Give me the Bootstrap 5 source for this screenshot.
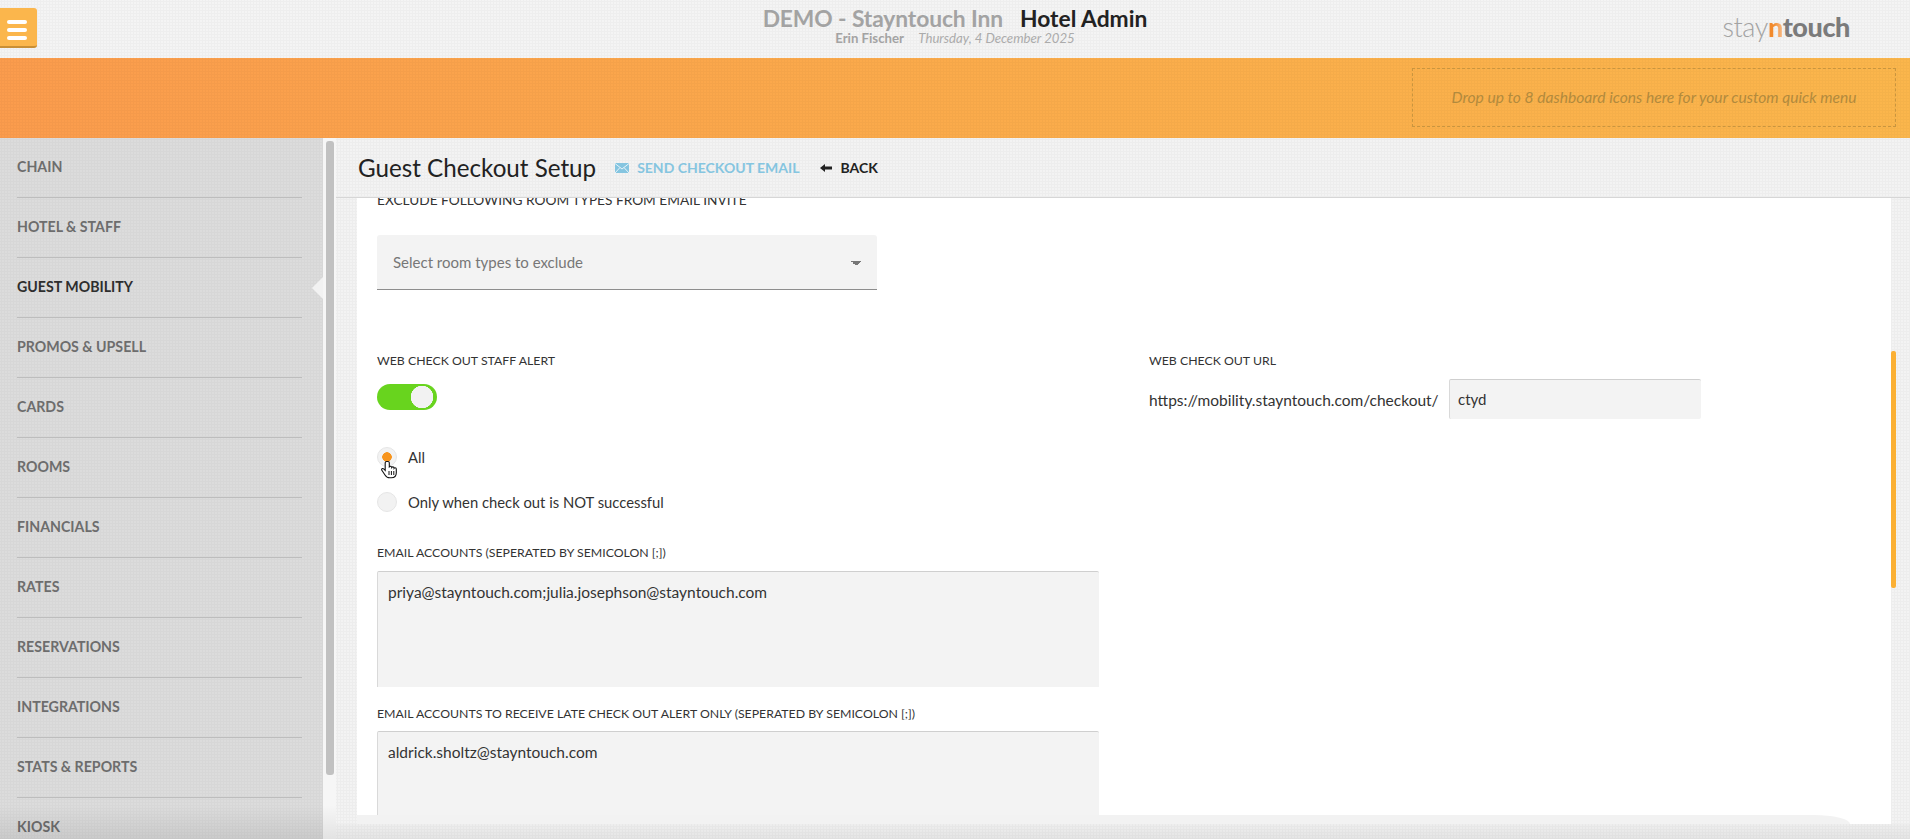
<!DOCTYPE html>
<html lang="en">
<head>
  <meta charset="UTF-8">
  <meta name="viewport" content="width=device-width, initial-scale=1.0">
  <title>Guest Checkout Setup</title>
  <link href="https://cdn.jsdelivr.net/npm/bootstrap@5.3.0/dist/css/bootstrap.min.css" rel="stylesheet">
  <style>
    :root { --weave: radial-gradient(rgba(0,0,0,.025) 1px, transparent 1.2px); }
    html, body { height: 839px; overflow: hidden; }
    body { font-family: Lato, "Liberation Sans", sans-serif; color: #333; background: #f2f2f2; font-size: 15px; }

    .top-head { height: 58px; background-color: #f4f4f4; background-image: var(--weave); background-size: 3px 3px; display: grid; grid-template-columns: 1fr auto 1fr; }
    .menu-btn { width: 37px; height: 40px; margin-top: 8px; padding: 10px 10px 0 7px; background: #fbb64c; border: 0; border-bottom: 2px solid #c98f35; border-radius: 0 3px 3px 0; }
    .menu-btn span { display: block; height: 4px; margin-bottom: 4px; background: #fff; border-radius: 2px; }
    .head-title { font-size: 22.800px; line-height: 28px; font-weight: 700; padding-top: 4px; text-align: center; white-space: nowrap; }
    .head-title .hotel { color: #a3a3a3; margin-right: 17px; letter-spacing: -.1px; }
    .head-title .role { color: #222; }
    .head-sub { font-size: 13.200px; line-height: 14px; margin-top: -1px; color: #a3a3a3; text-align: center; }
    .head-sub b { font-weight: 700; margin-right: 11px; }
    .head-sub i { color: #ababab; }
    .brand-word { justify-self: end; margin: 9px 60px 0 0; font-size: 27px; line-height: 36px; color: #a3a3a3; font-weight: 300; letter-spacing: -.4px; }
    .brand-word b { font-weight: 900; color: #7b7b7b; }
    .brand-word .n-mark { background: linear-gradient(90deg, #f28a2c 35%, #f7bd8c 100%); -webkit-background-clip: text; background-clip: text; color: transparent; }

    .orange-band { height: 80px; padding: 10px 14px 11px 0; background-color: #fbaa4c; background-image: var(--weave), linear-gradient(90deg, #fb9c4d 0%, #fbab4b 50%, #fbb64c 100%); background-size: 3px 3px, auto; display: flex; justify-content: flex-end; }
    .drop-zone { width: 484px; border: 1px dashed #c9953f; display: flex; align-items: center; justify-content: center; font-style: italic; font-size: 15.600px; color: #b28a3d; }

    .work-area { height: 701px; position: relative; }
    .side-menu { width: 323px; background-color: #dcdcdc; background-image: var(--weave); background-size: 3px 3px; padding: 0 21px 0 17px; overflow: hidden; }
    .side-link { height: 60px; line-height: 58px; border-bottom: 1px solid #bdbdbd; color: #6d6d6d; font-weight: 700; font-size: 14.200px; text-decoration: none; display: block; position: relative; }
    .side-link:last-child { border-bottom: 0; }
    .side-link.is-active { color: #2e2e2e; }
    .side-link.is-active::after { content: ""; position: absolute; right: -21px; top: 19px; border: 11px solid transparent; border-right-color: #f2f2f2; border-left-width: 0; }
    .side-gutter { width: 13px; padding: 3px 2px 0 3px; background: #f6f6f6; }
    .gutter-thumb { height: 634px; background: #c1c1c1; border-radius: 3px; }

    .page-pane { min-width: 0; background-color: #f3f3f3; background-image: var(--weave); background-size: 3px 3px; }
    .page-title-row { height: 60px; padding-left: 22px; border-bottom: 1px solid #d6d6d6; }
    .page-title-row h1 { font-size: 24.200px; font-weight: 400; color: #222; margin: 0 19px 0 0; }
    .mail-link { color: #85c5e0; font-weight: 700; font-size: 14px; text-decoration: none; }
    .back-link { color: #222; font-weight: 700; font-size: 14px; text-decoration: none; margin-left: 21px; }

    .pane-body { height: 626px; padding-left: 21px; }
    .white-sheet { background: #fff; height: 626px; width: 1534px; overflow: hidden; padding-left: 20px; position: relative; }
    .pane-track { width: 19px; padding: 153px 14px 0 0; }
    .pane-thumb { height: 237px; background: #fbb034; border-radius: 2px; }

    .field-label { font-size: 12.300px; color: #333; line-height: 16px; margin-bottom: 0; }
    .clip-label { margin-top: -6px; font-size: 13.700px; width: 500px; white-space: nowrap; }
    .room-select { width: 500px; height: 55px; margin-top: 27px; background-color: #f3f3f3; color: #777; border: 0; border-bottom: 1px solid #8d8d8d; border-radius: 3px 3px 0 0; font-size: 15px; padding-left: 16px; box-shadow: none; background-image: linear-gradient(45deg, transparent 50%, #777 50%), linear-gradient(-45deg, transparent 50%, #777 50%); background-size: 5px 5px, 5px 5px; background-position: 474px 26px, 479px 26px; background-repeat: no-repeat; }

    .alert-row { padding-top: 63px; height: 255px; }
    .alert-left { width: 772px; }
    .switch-box { margin: 15px 0 0; padding: 0; min-height: 0; height: 26px; }
    .form-switch .switch-input, .form-switch .switch-input:checked { width: 60px; height: 26px; margin: 0; float: none; border: 0; display: block; background-color: #68d41e; background-image: radial-gradient(circle at 45px 13px, #f2f2f2 11px, transparent 11.500px); background-position: 0 0; background-size: auto; }
    .radio-line { display: flex; align-items: center; gap: 11px; padding: 0; margin: 0; height: 20px; min-height: 0; font-size: 14.800px; line-height: 20px; position: relative; }
    .radio-first { margin-top: 37px; }
    .radio-second { margin-top: 25px; }
    .radio-line .form-check-input { float: none; width: 20px; height: 20px; margin: 0; background-color: #f2f2f2; border: 1px solid #e6e6e6; background-image: none; box-shadow: none; flex-shrink: 0; }
    .radio-line .form-check-input:checked { background-color: #f2f2f2; background-image: radial-gradient(circle, #f7941d 4.500px, transparent 5px); }
    .hand-cursor { position: absolute; left: 4px; top: 13px; width: 17px; height: 19px; }

    .mail-box { width: 722px; height: 116px; resize: none; border: 0; border-left: 1px solid #d9d9d9; border-top: 1px solid #cfcfcf; border-radius: 2px 2px 0 0; background: #f3f3f3; color: #333; font-size: 15.500px; line-height: 20px; padding: 10px 10px 7px; box-shadow: none; }
    .mail-box-tall { height: 150px; padding-top: 10px; }
    .gap-box-a { margin-top: 10px; }
    .gap-label-b { margin-top: 19px; }
    .gap-box-b { margin-top: 9px; }
    .url-row { margin-top: 10px; }
    .url-text { font-size: 15.500px; width: 300px; white-space: nowrap; padding-top: 4px; }
    .slug-input { width: 252px; height: 40px; border: 0; border-top: 1px solid #cfcfcf; border-left: 1px solid #d9d9d9; border-radius: 2px; background: #f3f3f3; color: #333; font-size: 15px; padding: 0 8px 2px; box-shadow: none; }

    .fade-strip { position: absolute; left: 0; right: 41px; bottom: 0; height: 9px; background: #f2f2f2; border-top-right-radius: 36px 9px; }
    .side-fade { position: absolute; left: 0; bottom: 0; width: 336px; height: 34px; background: linear-gradient(rgba(0,0,0,0), rgba(0,0,0,.08)); pointer-events: none; }
    .pane-fade { position: absolute; left: 336px; right: 0; bottom: 0; height: 15px; background: linear-gradient(rgba(0,0,0,.02), rgba(0,0,0,.06)); pointer-events: none; }
  </style>
</head>
<body>
  <header class="top-head">
    <div>
      <button class="menu-btn" type="button" aria-label="Menu"><span></span><span></span><span></span></button>
    </div>
    <div>
      <div class="head-title"><span class="hotel">DEMO - Stayntouch Inn</span><span class="role">Hotel Admin</span></div>
      <div class="head-sub"><b>Erin Fischer</b> <i>Thursday, 4 December 2025</i></div>
    </div>
    <div class="brand-word">stay<b><span class="n-mark">n</span>touch</b></div>
  </header>

  <div class="orange-band">
    <div class="drop-zone">Drop up to 8 dashboard icons here for your custom quick menu</div>
  </div>

  <div class="work-area d-flex">
    <nav class="side-menu flex-shrink-0">
      <a class="side-link" href="#">CHAIN</a>
      <a class="side-link" href="#">HOTEL &amp; STAFF</a>
      <a class="side-link is-active" href="#">GUEST MOBILITY</a>
      <a class="side-link" href="#">PROMOS &amp; UPSELL</a>
      <a class="side-link" href="#">CARDS</a>
      <a class="side-link" href="#">ROOMS</a>
      <a class="side-link" href="#">FINANCIALS</a>
      <a class="side-link" href="#">RATES</a>
      <a class="side-link" href="#">RESERVATIONS</a>
      <a class="side-link" href="#">INTEGRATIONS</a>
      <a class="side-link" href="#">STATS &amp; REPORTS</a>
      <a class="side-link" href="#">KIOSK</a>
    </nav>
    <div class="side-gutter flex-shrink-0"><div class="gutter-thumb"></div></div>

    <main class="page-pane flex-grow-1">
      <div class="page-title-row d-flex align-items-center">
        <h1>Guest Checkout Setup</h1>
        <a class="mail-link d-flex align-items-center gap-2" href="#">
          <svg width="14" height="10" viewBox="0 0 14 10"><rect width="14" height="10" fill="#85c5e0"/><path d="M0 .5 7 6l7-5.500M0 10l5-5.500M14 10 9 4.500" fill="none" stroke="#e6f3f9" stroke-width="1"/></svg>
          SEND CHECKOUT EMAIL
        </a>
        <a class="back-link d-flex align-items-center gap-2" href="#">
          <svg width="12" height="8" viewBox="0 0 12 8"><path d="M0 4 5 0v2.500h7v3H5V8z" fill="#222"/></svg>
          BACK
        </a>
      </div>

      <div class="pane-body d-flex">
        <section class="white-sheet">
          <div class="field-label clip-label">EXCLUDE FOLLOWING ROOM TYPES FROM EMAIL INVITE</div>
          <select class="form-select room-select">
            <option>Select room types to exclude</option>
          </select>

          <div class="alert-row d-flex">
            <div class="alert-left">
              <div class="field-label">WEB CHECK OUT STAFF ALERT</div>
              <div class="form-check form-switch switch-box">
                <input class="form-check-input switch-input" type="checkbox" role="switch" checked>
              </div>
              <label class="form-check radio-line radio-first">
                <input class="form-check-input" type="radio" name="alertMode" checked>
                <span>All</span>
                <svg class="hand-cursor" viewBox="0 0 17 19"><path d="M5.500 1.500c-.8 0-1.300.6-1.300 1.300v7.500L2.700 8.800c-.7-.6-1.700-.4-2 .3-.2.500 0 1 .3 1.400l3 4.500c1 1.800 2.500 2.800 4.800 2.800h1.500c3 0 5-2 5-5V9c0-.8-.5-1.300-1.200-1.300-.4 0-.8.200-1 .5 0-.8-.6-1.300-1.300-1.300-.5 0-.9.200-1.100.6-.1-.7-.6-1.200-1.300-1.200-.4 0-.8.200-1.100.5V2.800c0-.7-.6-1.300-1.300-1.300z" fill="#fff" stroke="#111" stroke-width="1.100"/><path d="M8 11v4M10.400 11v4M12.800 11v4" stroke="#111" stroke-width="1"/></svg>
              </label>
              <label class="form-check radio-line radio-second">
                <input class="form-check-input" type="radio" name="alertMode">
                <span>Only when check out is NOT successful</span>
              </label>
            </div>
            <div>
              <div class="field-label">WEB CHECK OUT URL</div>
              <div class="url-row d-flex align-items-center">
                <span class="url-text">https://mobility.stayntouch.com/checkout/</span>
                <input class="form-control slug-input" type="text" value="ctyd">
              </div>
            </div>
          </div>

          <div class="field-label">EMAIL ACCOUNTS (SEPERATED BY SEMICOLON [;])</div>
          <textarea class="form-control mail-box gap-box-a">priya@stayntouch.com;julia.josephson@stayntouch.com</textarea>
          <div class="field-label gap-label-b">EMAIL ACCOUNTS TO RECEIVE LATE CHECK OUT ALERT ONLY (SEPERATED BY SEMICOLON [;])</div>
          <textarea class="form-control mail-box mail-box-tall gap-box-b">aldrick.sholtz@stayntouch.com</textarea>
          <div class="fade-strip"></div>
        </section>
        <div class="pane-track"><div class="pane-thumb"></div></div>
      </div>
    </main>
    <div class="side-fade"></div>
    <div class="pane-fade"></div>
  </div>

  <script src="https://cdn.jsdelivr.net/npm/bootstrap@5.3.0/dist/js/bootstrap.bundle.min.js"></script>
</body>
</html>
